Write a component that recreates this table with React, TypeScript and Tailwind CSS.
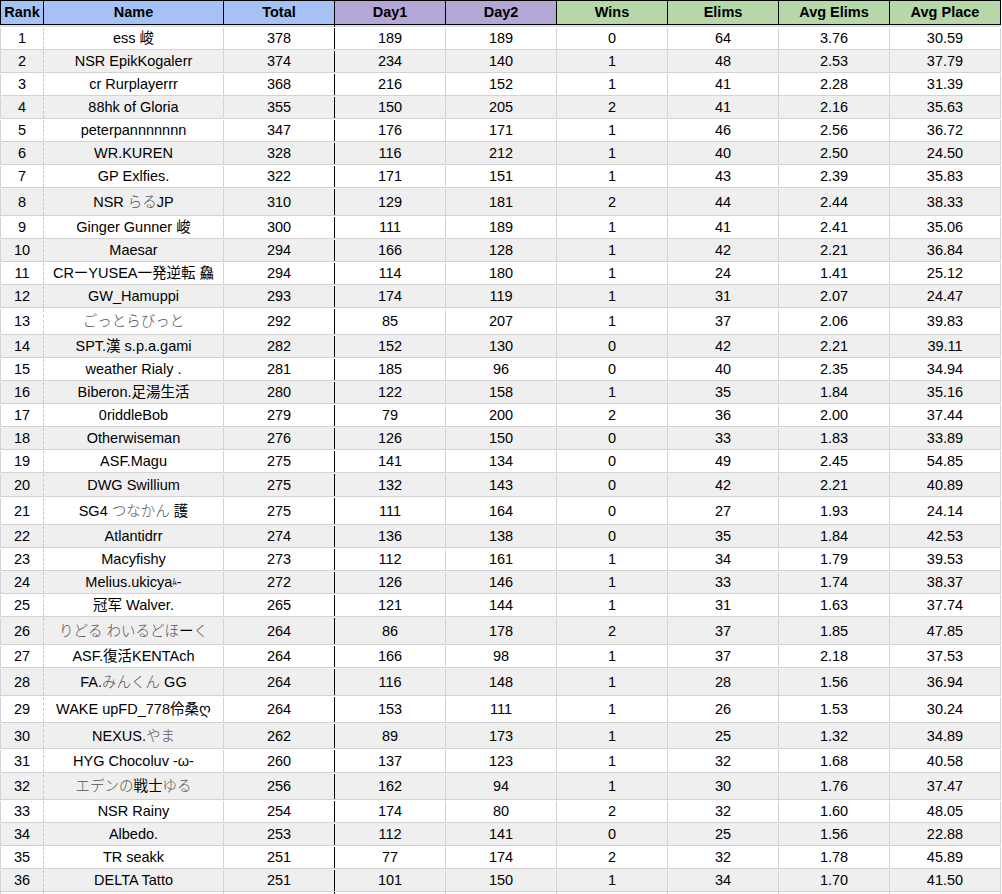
import React from "react";

type Row = [number, string, number, number, number, number, number, string, string];

const rows: Row[] = [
  [1, "ess 峻", 378, 189, 189, 0, 64, "3.76", "30.59"],
  [2, "NSR EpikKogalerr", 374, 234, 140, 1, 48, "2.53", "37.79"],
  [3, "cr Rurplayerrr", 368, 216, 152, 1, 41, "2.28", "31.39"],
  [4, "88hk of Gloria", 355, 150, 205, 2, 41, "2.16", "35.63"],
  [5, "peterpannnnnnn", 347, 176, 171, 1, 46, "2.56", "36.72"],
  [6, "WR.KUREN", 328, 116, 212, 1, 40, "2.50", "24.50"],
  [7, "GP Exlfies.", 322, 171, 151, 1, 43, "2.39", "35.83"],
  [8, "NSR らるJP", 310, 129, 181, 2, 44, "2.44", "38.33"],
  [9, "Ginger Gunner 峻", 300, 111, 189, 1, 41, "2.41", "35.06"],
  [10, "Maesar", 294, 166, 128, 1, 42, "2.21", "36.84"],
  [11, "CRーYUSEA一発逆転 鱻", 294, 114, 180, 1, 24, "1.41", "25.12"],
  [12, "GW_Hamuppi", 293, 174, 119, 1, 31, "2.07", "24.47"],
  [13, "ごっとらびっと", 292, 85, 207, 1, 37, "2.06", "39.83"],
  [14, "SPT.漢 s.p.a.gami", 282, 152, 130, 0, 42, "2.21", "39.11"],
  [15, "weather Rialy .", 281, 185, 96, 0, 40, "2.35", "34.94"],
  [16, "Biberon.足湯生活", 280, 122, 158, 1, 35, "1.84", "35.16"],
  [17, "0riddleBob", 279, 79, 200, 2, 36, "2.00", "37.44"],
  [18, "Otherwiseman", 276, 126, 150, 0, 33, "1.83", "33.89"],
  [19, "ASF.Magu", 275, 141, 134, 0, 49, "2.45", "54.85"],
  [20, "DWG Swillium", 275, 132, 143, 0, 42, "2.21", "40.89"],
  [21, "SG4 つなかん 護", 275, 111, 164, 0, 27, "1.93", "24.14"],
  [22, "Atlantidrr", 274, 136, 138, 0, 35, "1.84", "42.53"],
  [23, "Macyfishy", 273, 112, 161, 1, 34, "1.79", "39.53"],
  [24, "Melius.ukicya", 272, 126, 146, 1, 33, "1.74", "38.37"],
  [25, "冠军 Walver.", 265, 121, 144, 1, 31, "1.63", "37.74"],
  [26, "りどる わいるどほーく", 264, 86, 178, 2, 37, "1.85", "47.85"],
  [27, "ASF.復活KENTAch", 264, 166, 98, 1, 37, "2.18", "37.53"],
  [28, "FA.みんくん GG", 264, 116, 148, 1, 28, "1.56", "36.94"],
  [29, "WAKE upFD_778伶桑ღ", 264, 153, 111, 1, 26, "1.53", "30.24"],
  [30, "NEXUS.やま", 262, 89, 173, 1, 25, "1.32", "34.89"],
  [31, "HYG Chocoluv -ω-", 260, 137, 123, 1, 32, "1.68", "40.58"],
  [32, "エデンの戦士ゆる", 256, 162, 94, 1, 30, "1.76", "37.47"],
  [33, "NSR Rainy", 254, 174, 80, 2, 32, "1.60", "48.05"],
  [34, "Albedo.", 253, 112, 141, 0, 25, "1.56", "22.88"],
  [35, "TR seakk", 251, 77, 174, 2, 32, "1.78", "45.89"],
  [36, "DELTA Tatto", 251, 101, 150, 1, 34, "1.70", "41.50"],
];

const heights: Record<number, string> = {
  8: "h-[28px]",
  13: "h-[27px]",
  20: "h-[24px]",
  21: "h-[28px]",
  26: "h-[28px]",
  28: "h-[28px]",
  29: "h-[27px]",
  30: "h-[26px]",
  31: "h-[24px]",
  32: "h-[27px]",
};

function NameText({ name, rank }: { name: string; rank: number }) {
  const parts: React.ReactNode[] = [];
  let buf = "";
  let kana = false;
  const flush = (k: boolean, key: number) => {
    if (!buf) return;
    parts.push(
      k ? (
        <span key={key} className="text-[#555555] font-light">
          {buf}
        </span>
      ) : (
        <span key={key}>{buf}</span>
      )
    );
    buf = "";
  };
  let i = 0;
  for (const ch of name) {
    const isKana = /[\u3040-\u30fc]/.test(ch) && ch !== "ー";
    if (isKana !== kana) {
      flush(kana, i++);
      kana = isKana;
    }
    buf += ch;
  }
  flush(kana, i++);
  if (rank === 24) {
    parts.push(
      <span key="x" className="text-[9px] relative -top-[2px]">
        ﾑ
      </span>
    );
    parts.push(<span key="y">-</span>);
  }
  return <span className="whitespace-pre">{parts}</span>;
}

const cell = "flex items-center justify-center border-r border-[#d3d3d3]";
const hcell = "flex items-center justify-center border-r border-black font-bold";

export default function App() {
  return (
    <div
      className="w-[1002px] h-[894px] overflow-hidden bg-white text-black text-[14.5px] leading-none"
      style={{ fontFamily: '"Liberation Sans", Arial, "Noto Sans CJK JP", sans-serif' }}
    >
      <div className="w-[1001px]">
        {/* header */}
        <div className="flex h-[25px] border-t border-b border-black">
          <div className={`${hcell} w-[44px] border-l bg-[#a4c2f4]`}>Rank</div>
          <div className={`${hcell} w-[180px] bg-[#a4c2f4]`}>Name</div>
          <div className={`${hcell} w-[111px] bg-[#a4c2f4]`}>Total</div>
          <div className={`${hcell} w-[111px] bg-[#b4a7d6]`}>Day1</div>
          <div className={`${hcell} w-[111px] bg-[#b4a7d6]`}>Day2</div>
          <div className={`${hcell} w-[111px] bg-[#b6d7a8]`}>Wins</div>
          <div className={`${hcell} w-[111px] bg-[#b6d7a8]`}>Elims</div>
          <div className={`${hcell} w-[111px] bg-[#b6d7a8]`}>Avg Elims</div>
          <div className={`${hcell} w-[111px] bg-[#b6d7a8]`}>Avg Place</div>
        </div>
        <div className="flex h-[2px]">
          <div className="w-[44px] bg-[#dde3ea]" />
          <div className="w-[180px] bg-[#dde3ea]" />
          <div className="w-[110px] bg-[#dde3ea]" />
          <div className="w-[1px] bg-black" />
          <div className="flex-1 bg-[#dde3ea]" />
        </div>
        {rows.map((r) => {
          const [rank, name, total, d1, d2, wins, elims, ae, ap] = r;
          const h = heights[rank] ?? "h-[23px]";
          const bg = rank % 2 === 0 ? "bg-[#efefef]" : "bg-white";
          return (
            <div key={rank} className={`flex ${h} ${bg} border-b border-[#d3d3d3] pt-[1px]`}>
              <div className={`${cell} w-[44px] border-l [border-right-style:dashed] border-r-[#c8c8c8]`}>{rank}</div>
              <div className={`${cell} w-[180px] whitespace-nowrap`}>
                <NameText name={name} rank={rank} />
              </div>
              <div className={`${cell} w-[111px] border-r-black`}>{total}</div>
              <div className={`${cell} w-[111px]`}>{d1}</div>
              <div className={`${cell} w-[111px]`}>{d2}</div>
              <div className={`${cell} w-[111px]`}>{wins}</div>
              <div className={`${cell} w-[111px]`}>{elims}</div>
              <div className={`${cell} w-[111px]`}>{ae}</div>
              <div className={`${cell} w-[111px]`}>{ap}</div>
            </div>
          );
        })}
        <div className="flex h-[23px] bg-white">
          <div className={`${cell} w-[44px] border-l`} />
          <div className={`${cell} w-[180px]`} />
          <div className={`${cell} w-[111px] border-r-black`} />
          <div className={`${cell} w-[111px]`} />
          <div className={`${cell} w-[111px]`} />
          <div className={`${cell} w-[111px]`} />
          <div className={`${cell} w-[111px]`} />
          <div className={`${cell} w-[111px]`} />
          <div className={`${cell} w-[111px]`} />
        </div>
      </div>
    </div>
  );
}
